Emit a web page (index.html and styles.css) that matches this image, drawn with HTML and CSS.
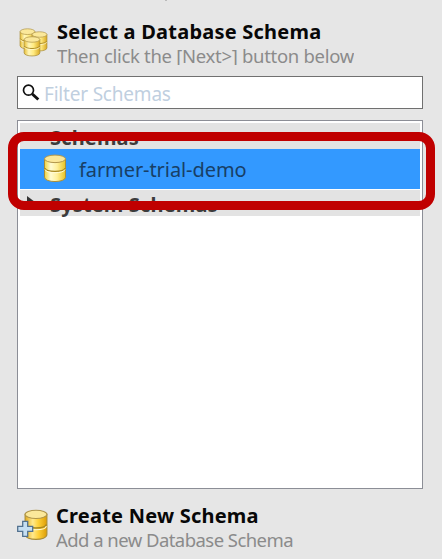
FILE: index.html
```html
<!DOCTYPE html>
<html lang="en">
<head>
<meta charset="utf-8">
<title>Select a Database Schema</title>
<link rel="stylesheet" href="styles.css">
</head>
<body>
<svg class="defs" width="0" height="0" aria-hidden="true">
  <defs>
    <linearGradient id="gold"><stop offset="0" stop-color="#e8bf35"/><stop offset=".3" stop-color="#fff6b8"/><stop offset=".6" stop-color="#ffea80"/><stop offset="1" stop-color="#d9a922"/></linearGradient>
    <linearGradient id="pale"><stop offset="0" stop-color="#f0d33e"/><stop offset=".3" stop-color="#fffbd2"/><stop offset=".6" stop-color="#fff09a"/><stop offset="1" stop-color="#e8c423"/></linearGradient>
    <linearGradient id="amber"><stop offset="0" stop-color="#e2a91c"/><stop offset=".35" stop-color="#ffe98e"/><stop offset=".6" stop-color="#ffd23b"/><stop offset="1" stop-color="#dc9c05"/></linearGradient>
    <symbol id="db" viewBox="0 0 24 30" preserveAspectRatio="none">
      <path d="M1.500 5v19c0 6 21 6 21 0V5z" stroke="#a88c38" stroke-width="1"/>
      <path d="M2 14.500c1 4.500 19 4.500 20 0" fill="none" stroke="#a88820" stroke-width="1.300"/>
      <path d="M2 16c1 4.500 19 4.500 20 0" fill="none" stroke="#fffbd8" stroke-width="1"/>
      <ellipse cx="12" cy="5" rx="10.500" ry="3.900" fill="#fbe89a" stroke="#b0954a" stroke-width="1"/>
    </symbol>
  </defs>
</svg>
<div class="mark"></div>
<main class="panel">
  <header class="heading">
    <svg class="icon" width="32" height="34" viewBox="0 0 32 34">
      <use href="#db" x="2" y="3" width="17" height="22" fill="url(#gold)"/>
      <use href="#db" x="14" y="6" width="17" height="21" fill="url(#gold)"/>
      <use href="#db" x="6" y="11" width="18" height="21" fill="url(#gold)"/>
    </svg>
    <div>
      <h1 class="title t-select">Select a Database Schema</h1>
      <p class="subtitle s-next">Then click the [Next&gt;] button below</p>
    </div>
  </header>
  <div class="filter">
    <svg width="20" height="20" viewBox="0 0 20 20"><circle cx="6.500" cy="7.200" r="5" fill="#fff" stroke="#111" stroke-width="1.700"/><path d="M10.300 11l6 5.500" stroke="#111" stroke-width="3"/></svg>
    <span class="placeholder">Filter Schemas</span>
  </div>
  <section class="list">
    <div class="group first"><svg class="arrow" width="18" height="12"><path d="M3 2h13l-6 7z" fill="#555"/></svg><span class="g-schemas">Schemas</span></div>
    <div class="item"><svg width="24" height="30"><use href="#db" width="24" height="29" y="0" fill="url(#pale)"/></svg><span class="name">farmer-trial-demo</span></div>
    <div class="group second"><svg class="arrow" width="18" height="14"><path d="M7 0l8 6-8 6z" fill="#333"/></svg><span class="g-system">System Schemas</span></div>
    <div class="highlight"></div>
  </section>
  <footer class="heading create">
    <svg class="icon" width="32" height="34" viewBox="0 0 32 34">
      <use href="#db" x="6.500" y="1" width="25" height="32" fill="url(#amber)"/>
      <path d="M5 14h5v5h5v5h-5v5H5v-5H0v-5h5z" transform="translate(.7 -.7)" fill="#c5def2" stroke="#52718f" stroke-width="1.300"/>
    </svg>
    <div>
      <h2 class="title t-create">Create New Schema</h2>
      <p class="subtitle s-add">Add a new Database Schema</p>
    </div>
  </footer>
</main>
</body>
</html>
```
FILE: styles.css
```css
* { box-sizing: border-box; margin: 0; padding: 0; }
html { background: #e6e6e6; }
body { width: 442px; height: 559px; overflow: hidden; font-family: "Noto Sans", "Open Sans", sans-serif; white-space: nowrap; }
.defs, .mark { position: absolute; }
.mark { left: 165px; top: 0; width: 2px; height: 1px; background: #bbb; }
svg { display: block; flex: none; }
.panel { padding: 18px 19px 0 17px; }
.heading { display: flex; height: 58px; }
.icon { margin: 7px 7px 0 0; }
.heading .icon + div { padding-left: 1px; }
.title { font-size: 20px; line-height: 27px; height: 26px; font-weight: 700; letter-spacing: .22px; color: #080808; }
.subtitle { font-size: 18.500px; line-height: 24px; height: 21px; overflow: hidden; letter-spacing: -.3px; color: #8b8b8b; }
.filter { display: flex; align-items: center; height: 33px; padding-left: 4px; background: #fff; border: 1px solid #707070; }
.placeholder { margin: 2px 0 0 2px; font-size: 19px; letter-spacing: -.2px; color: #c0cfdf; }
.list { position: relative; height: 369px; margin-top: 11px; padding: 2px; background: #fff; border: 1px solid #8c8e96; }
.group { display: flex; align-items: center; background: #e3e3e3; color: #3c3c3c; font-size: 20px; font-weight: 700; line-height: 26px; letter-spacing: .15px; }
.group span { padding-top: 3px; }
.first { height: 26px; }
.second { height: 26px; margin-top: 1px; }
.arrow { margin-right: 12px; }
.item { display: flex; align-items: center; height: 40px; padding-left: 23px; background: #3399ff; color: #183f66; font-size: 20px; }
.name { margin-left: 12px; letter-spacing: -.08px; }
.highlight { position: absolute; left: -10px; top: 11px; width: 427px; height: 78px; border: 9px solid #c00000; border-radius: 16px; }
.create { margin-top: 13px; }
.create .icon { margin: 6px 6px 0 0; }
.create .subtitle { height: 24px; letter-spacing: -.55px; }
```
